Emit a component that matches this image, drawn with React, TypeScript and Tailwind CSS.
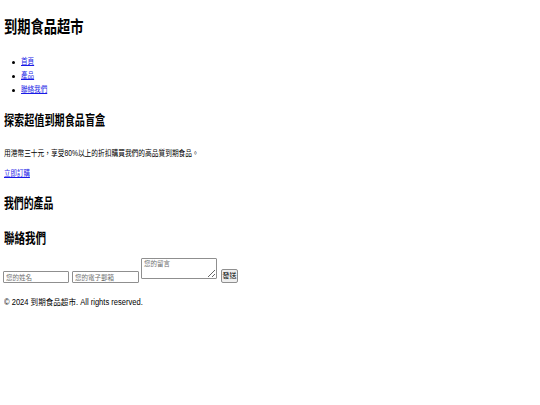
import React from "react";

const cjk = { fontFamily: '"Liberation Sans", "Noto Sans CJK TC", sans-serif' };

export default function App() {
  return (
    <div
      className="w-[540px] h-[405px] bg-white text-black overflow-hidden pl-[4px] flex flex-col"
      style={cjk}
    >
      <h1 className="mt-[18px] h-[20px] leading-[20px] text-[17px] font-bold whitespace-nowrap">
        <span className="inline-block origin-left scale-x-[0.78]">到期食品超市</span>
      </h1>

      <ul className="mt-[17px] flex flex-col">
        {["首頁", "產品", "聯絡我們"].map((t) => (
          <li key={t} className="h-[14px] flex items-center">
            <span className="ml-[8px] w-[3px] h-[3px] rounded-full bg-black" />
            <a
              href="#"
              className="ml-[6px] text-[8px] leading-[14px] text-[#1a1ae6] underline inline-block origin-left scale-x-[0.82] whitespace-nowrap"
            >
              {t}
            </a>
          </li>
        ))}
      </ul>

      <h2 className="mt-[16px] h-[16px] leading-[16px] text-[13.5px] font-bold whitespace-nowrap">
        <span className="inline-block origin-left scale-x-[0.75]">探索超值到期食品盲盒</span>
      </h2>

      <p className="mt-[18px] h-[12px] leading-[12px] text-[8.5px] whitespace-nowrap">
        <span className="inline-block origin-left scale-x-[0.79]">
          用港幣三十元，享受80%以上的折扣購買我們的高品質到期食品。
        </span>
      </p>

      <div className="mt-[9px] h-[12px] leading-[12px] text-[8px] whitespace-nowrap">
        <a href="#" className="inline-block origin-left scale-x-[0.81] text-[#1a1ae6] underline">
          立即訂購
        </a>
      </div>

      <h2 className="mt-[16px] h-[16px] leading-[16px] text-[13.5px] font-bold whitespace-nowrap">
        <span className="inline-block origin-left scale-x-[0.73]">我們的產品</span>
      </h2>

      <h2 className="mt-[19px] h-[16px] leading-[16px] text-[13.5px] font-bold whitespace-nowrap">
        <span className="inline-block origin-left scale-x-[0.78]">聯絡我們</span>
      </h2>

      <form className="mt-[11px] h-[25px] flex items-end" onSubmit={(e) => e.preventDefault()}>
        <input
          placeholder="您的姓名"
          className="-ml-[1px] w-[66px] h-[12px] border border-[#8f8f8f] rounded-[1px] bg-white px-[2px] text-[6.5px] leading-[10px] placeholder:text-[#6f6f6f] outline-none"
          style={cjk}
        />
        <input
          placeholder="您的電子郵箱"
          className="ml-[3px] w-[67px] h-[12px] border border-[#8f8f8f] rounded-[1px] bg-white px-[2px] text-[6.5px] leading-[10px] placeholder:text-[#6f6f6f] outline-none"
          style={cjk}
        />
        <textarea
          placeholder="您的留言"
          className="ml-[2px] mb-[4px] w-[76px] h-[21px] border border-[#8f8f8f] rounded-[1px] bg-white px-[2px] py-[1px] text-[6.5px] leading-[8px] placeholder:text-[#6f6f6f] outline-none resize"
          style={cjk}
        />
        <button
          type="submit"
          className="ml-[4px] w-[17px] h-[14px] border border-[#8f8f8f] rounded-[2px] bg-[#efefef] text-[7px] leading-[12px] text-black p-0"
          style={cjk}
        >
          發送
        </button>
      </form>

      <footer className="mt-[13px] h-[12px] leading-[12px] text-[8.5px] whitespace-nowrap">
        <span className="inline-block origin-left scale-x-[0.89]">© 2024 到期食品超市. All rights reserved.</span>
      </footer>
    </div>
  );
}
